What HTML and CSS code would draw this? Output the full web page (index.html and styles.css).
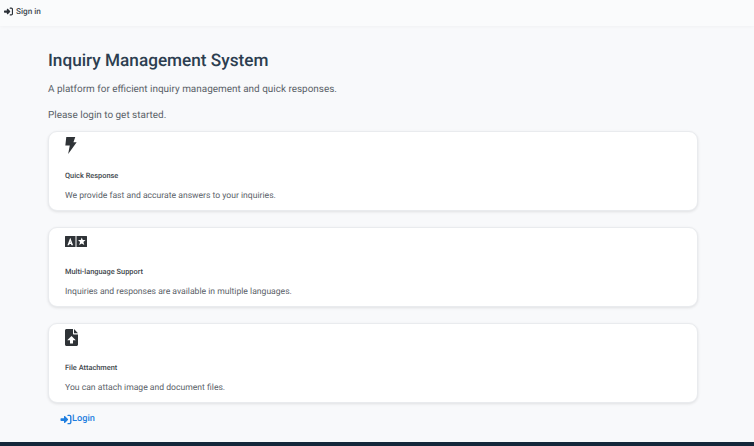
FILE: index.html
```html
<!DOCTYPE html>
<html lang="en">
<head>
<meta charset="utf-8">
<title>Inquiry Management System</title>
<link rel="stylesheet" href="styles.css">
</head>
<body>
<header class="topbar">
  <a class="signin" href="#">
    <svg class="signin-icon" viewBox="0 0 512 512"><path d="M352 96h64c18 0 32 14 32 32v256c0 18-14 32-32 32h-64c-18 0-32 14-32 32s14 32 32 32h64c53 0 96-43 96-96V128c0-53-43-96-96-96h-64c-18 0-32 14-32 32s14 32 32 32zM345 279c13-13 13-33 0-46L217 105c-9-9-23-12-35-7s-20 17-20 30v64H32c-18 0-32 14-32 32v64c0 18 14 32 32 32h130v64c0 13 8 25 20 30s26 2 35-7z"/></svg>
    <span>Sign in</span>
  </a>
</header>
<main class="content">
  <h1 class="title">Inquiry Management System</h1>
  <p class="lead">A platform for efficient inquiry management and quick responses.</p>
  <p class="lead">Please login to get started.</p>
  <section class="cards">
    <article class="card">
      <svg class="icon icon-bolt" viewBox="0 0 12 18"><path d="M1 0h9.500L8.600 5.500H12L3 18l1.700-9H0z"/></svg>
      <h2 class="card-title">Quick Response</h2>
      <p class="card-text">We provide fast and accurate answers to your inquiries.</p>
    </article>
    <article class="card">
      <svg class="icon icon-lang" viewBox="0 0 22 11"><path fill-rule="evenodd" d="M.5 0h10v11H.5A.5.5 0 0 1 0 10.500V.5A.5.5 0 0 1 .5 0zM5.250 1.800 2.400 9.200h1.700l.4-1.300h1.500l.4 1.300h1.700L5.250 1.800zM4.900 6.500l.35-1.300.35 1.300zM11.500 0h10a.5.5 0 0 1 .5.5v10a.5.5 0 0 1-.5.5h-10zM16.750 1.500l-1 2.500H13l2.100 1.900-.9 3.200 2.550-1.700 2.550 1.700-.9-3.200L20.500 4h-2.750z"/></svg>
      <h2 class="card-title">Multi-language Support</h2>
      <p class="card-text">Inquiries and responses are available in multiple languages.</p>
    </article>
    <article class="card">
      <svg class="icon icon-file" viewBox="0 0 13 17"><path fill-rule="evenodd" d="M1.500 0H8v4.500c0 .6.400 1 1 1h4V15.500c0 .8-.7 1.500-1.500 1.500h-10C.7 17 0 16.300 0 15.500v-14C0 .7.700 0 1.500 0zM6.500 7 2.200 11.200h2.800v3.300h3v-3.300h2.800zM9 0l4 4.300H9z"/></svg>
      <h2 class="card-title">File Attachment</h2>
      <p class="card-text">You can attach image and document files.</p>
    </article>
  </section>
  <a class="login" href="#">
    <svg class="login-icon" viewBox="0 0 512 512"><path d="M352 96h64c18 0 32 14 32 32v256c0 18-14 32-32 32h-64c-18 0-32 14-32 32s14 32 32 32h64c53 0 96-43 96-96V128c0-53-43-96-96-96h-64c-18 0-32 14-32 32s14 32 32 32zM345 279c13-13 13-33 0-46L217 105c-9-9-23-12-35-7s-20 17-20 30v64H32c-18 0-32 14-32 32v64c0 18 14 32 32 32h130v64c0 13 8 25 20 30s26 2 35-7z"/></svg>
    <span>Login</span>
  </a>
</main>
<footer class="footer"></footer>
</body>
</html>
```
FILE: styles.css
```css
* { box-sizing: border-box; }
html, body { height: 100%; }
body {
  margin: 0;
  height: 446px;
  overflow: hidden;
  display: flex;
  flex-direction: column;
  background: #f8f9fb;
  color: #5a6168;
  font-family: Roboto, "Noto Sans", sans-serif;
  text-rendering: geometricPrecision;
}
.topbar {
  height: 26px;
  flex: none;
  display: flex;
  align-items: center;
  padding: 0 0 3px 4px;
  background: #fafbfc;
  box-shadow: 0 1px 3px rgba(0, 0, 0, 0.03);
}
.signin {
  display: flex;
  align-items: center;
  gap: 3px;
  color: #444b52;
  font-size: 8.200px;
  font-weight: 500;
  text-decoration: none;
}
.signin-icon { width: 9px; height: 9px; fill: #2b3138; }
.content {
  flex: 1;
  padding: 24px 56px 0 48px;
}
.title {
  margin: 0 0 11px;
  color: #2c3e50;
  font-size: 17.200px;
  font-weight: 500;
  line-height: 22px;
}
.lead {
  margin: 0 0 12px;
  font-size: 9.950px;
  line-height: 14px;
}
.lead + .lead { margin-bottom: 8px; }
.cards {
  display: flex;
  flex-direction: column;
  gap: 16px;
}
.card {
  height: 80px;
  padding: 5px 16px 0;
  background: #fff;
  border: 1px solid #e9ebee;
  border-radius: 9px;
  box-shadow: 0 1px 3px rgba(0, 0, 0, 0.10);
}
.icon { display: block; fill: #2f3337; }
.icon-bolt { width: 12px; height: 17px; margin-bottom: 17px; }
.icon-lang { width: 22px; height: 11px; margin-top: 3px; margin-bottom: 20px; }
.icon-file { width: 13px; height: 17px; margin-bottom: 17px; }
.card-title {
  margin: 0 0 9px;
  color: #40464c;
  font-size: 7.400px;
  font-weight: 500;
  line-height: 10px;
}
.card-text {
  margin: 0;
  font-size: 8.600px;
  line-height: 12px;
}
.login {
  display: inline-flex;
  align-items: center;
  margin: 9px 0 0 12px;
  color: #1f7fe0;
  font-size: 9.200px;
  font-weight: 500;
  line-height: 14px;
  text-decoration: none;
}
.login-icon { width: 12px; height: 11px; fill: #1f7fe0; }
.footer {
  height: 4px;
  flex: none;
  background: #14273a;
}
```
